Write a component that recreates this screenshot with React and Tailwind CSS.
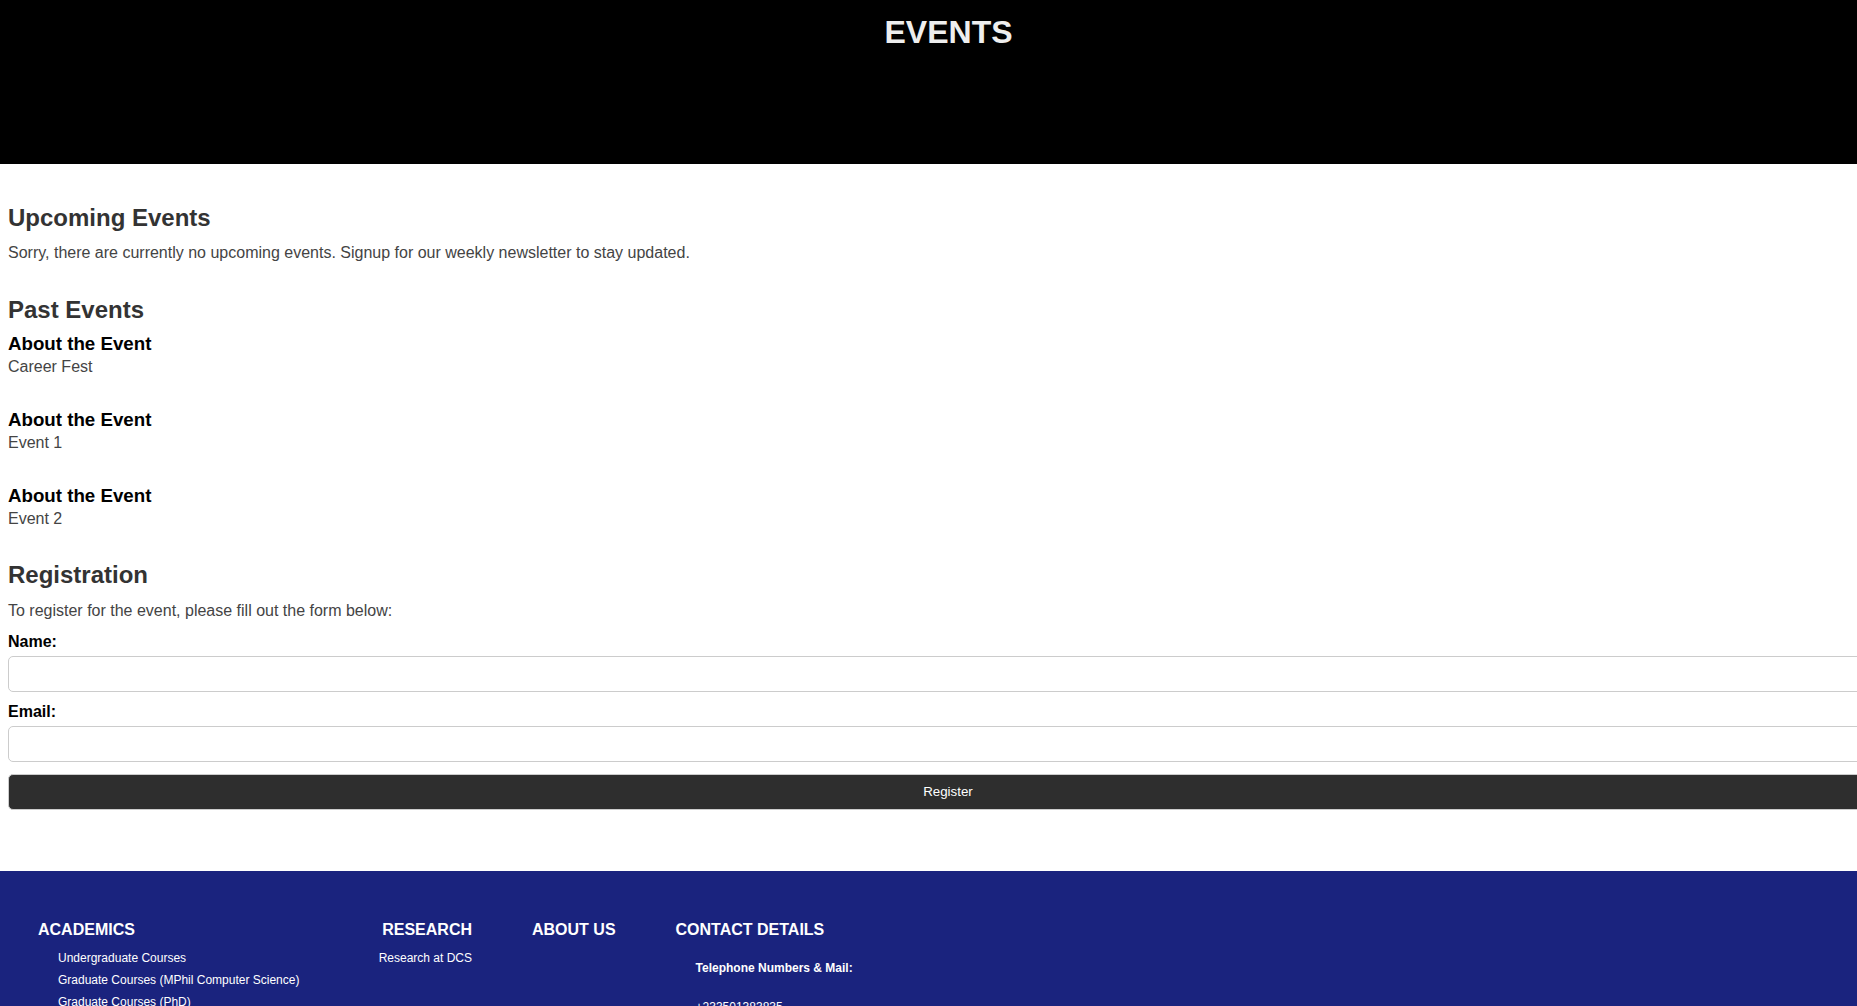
import { useState } from 'react';

// Events page: header, upcoming / past events, registration form, footer
const PAST_EVENTS = ['Career Fest', 'Event 1', 'Event 2'];

const ACADEMICS = [
    'Undergraduate Courses',
    'Graduate Courses (MPhil Computer Science)',
    'Graduate Courses (PhD)',
];

export default function App() {
    const [name, setName] = useState('');
    const [email, setEmail] = useState('');

    const handleSubmit = (e) => {
        e.preventDefault();
    };

    return (
        <div className="w-full overflow-x-hidden bg-white font-['Liberation_Sans',Arial,sans-serif]">
            {/* Header */}
            <header className="h-[164px] bg-black pl-[40px] pt-[14px] text-center">
                <h1 className="text-[32px] leading-[37px] font-bold text-[#eeeeee]">EVENTS</h1>
            </header>

            <main className="pl-[8px] pt-[40px]">
                <section>
                    <h2 className="text-[24px] leading-[28px] font-bold text-[#333333]">Upcoming Events</h2>
                    <p className="mt-[12px] text-[16px] leading-[18px] text-[#444444]">
                        Sorry, there are currently no upcoming events. Signup for our weekly newsletter to stay updated.
                    </p>
                </section>

                <section className="mt-[34px]">
                    <h2 className="text-[24px] leading-[28px] font-bold text-[#333333]">Past Events</h2>
                    <div className="mt-[9px] flex flex-col gap-[33px]">
                        {PAST_EVENTS.map((ev) => (
                            <div key={ev}>
                                <h3 className="text-[18.72px] leading-[21px] font-bold text-black">About the Event</h3>
                                <p className="mt-[4px] text-[16px] leading-[18px] text-[#444444]">{ev}</p>
                            </div>
                        ))}
                    </div>
                </section>

                <section className="mt-[33px]">
                    <h2 className="text-[24px] leading-[28px] font-bold text-[#333333]">Registration</h2>
                    <p className="mt-[13px] text-[16px] leading-[18px] text-[#444444]">
                        To register for the event, please fill out the form below:
                    </p>
                    <form onSubmit={handleSubmit} className="mt-[13px]">
                        <label htmlFor="name" className="block text-[16px] leading-[18px] font-bold text-black">Name:</label>
                        <input
                            id="name"
                            type="text"
                            value={name}
                            onChange={(e) => setName(e.target.value)}
                            className="mt-[5px] block h-[36px] w-[1880px] rounded-[5px] border border-[#cccccc] bg-white px-[10px] outline-none"
                        />
                        <label htmlFor="email" className="mt-[11px] block text-[16px] leading-[18px] font-bold text-black">Email:</label>
                        <input
                            id="email"
                            type="email"
                            value={email}
                            onChange={(e) => setEmail(e.target.value)}
                            className="mt-[5px] block h-[36px] w-[1880px] rounded-[5px] border border-[#cccccc] bg-white px-[10px] outline-none"
                        />
                        <button
                            type="submit"
                            className="mt-[12px] block h-[36px] w-[1880px] rounded-[5px] border border-[#cccccc] bg-[#2e2e2e] text-[13.33px] text-white"
                        >
                            Register
                        </button>
                    </form>
                </section>
            </main>

            {/* Footer */}
            <footer className="mt-[61px] bg-[#1a237e] pl-[38px] pt-[50px] pb-[40px] text-white">
                <div className="flex gap-[60px]">
                    <div className="w-[282px]">
                        <h4 className="text-[16px] leading-[18px] font-bold">ACADEMICS</h4>
                        <ul className="mt-[12px] pl-[20px]">
                            {ACADEMICS.map((item) => (
                                <li key={item} className="mb-[8px] text-[12px] leading-[14px]">{item}</li>
                            ))}
                        </ul>
                    </div>
                    <div className="flex w-[92px] flex-col items-end">
                        <h4 className="text-[16px] leading-[18px] font-bold">RESEARCH</h4>
                        <ul className="mt-[12px] whitespace-nowrap">
                            <li className="text-[12px] leading-[14px]">Research at DCS</li>
                        </ul>
                    </div>
                    <div>
                        <h4 className="text-[16px] leading-[18px] font-bold">ABOUT US</h4>
                    </div>
                    <div>
                        <h4 className="text-[16px] leading-[18px] font-bold">CONTACT DETAILS</h4>
                        <div className="mt-[22px] pl-[20px]">
                            <p className="text-[12px] leading-[14px] font-bold">Telephone Numbers &amp; Mail:</p>
                            <p className="mt-[25px] text-[12px] leading-[14px]">+233501383835</p>
                            <p className="mt-[8px] text-[12px] leading-[14px]">+233302213850</p>
                        </div>
                    </div>
                </div>
            </footer>
        </div>
    );
}
